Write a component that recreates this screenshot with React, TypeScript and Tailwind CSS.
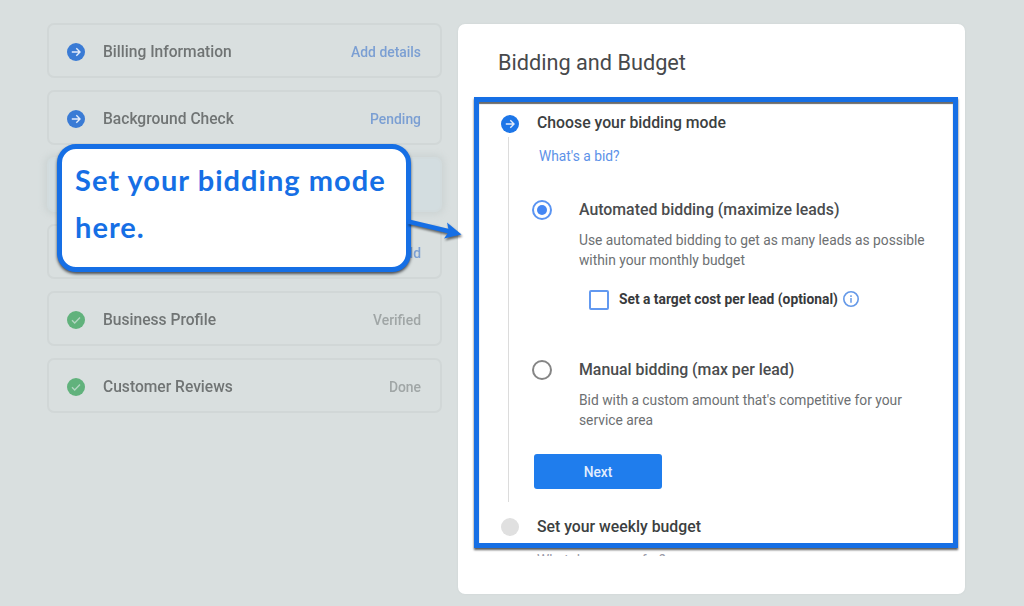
import React from 'react';
import clsx from 'clsx';

interface Step {
  title: string;
  status: string;
  kind: 'todo' | 'active' | 'done';
}

const steps: Step[] = [
  { title: 'Billing Information', status: 'Add details', kind: 'todo' },
  { title: 'Background Check', status: 'Pending', kind: 'todo' },
  { title: '', status: '', kind: 'active' },
  { title: '', status: 'Add', kind: 'todo' },
  { title: 'Business Profile', status: 'Verified', kind: 'done' },
  { title: 'Customer Reviews', status: 'Done', kind: 'done' },
];

const ArrowBadge: React.FC<{ className?: string }> = ({ className }) => (
  <svg viewBox="0 0 18 18" className={clsx('h-[18px] w-[18px] shrink-0', className)}>
    <circle cx="9" cy="9" r="9" fill="currentColor" />
    <path d="M4.8 9h8M9.3 5.3 13 9l-3.7 3.7" fill="none" stroke="#e3ecfb" strokeWidth="1.4" />
  </svg>
);

const CheckBadge: React.FC = () => (
  <svg viewBox="0 0 18 18" className="h-[18px] w-[18px] shrink-0">
    <circle cx="9" cy="9" r="9" fill="#61b27c" />
    <path d="m5 9.2 2.7 2.7L13 6.6" fill="none" stroke="#b3d6c2" strokeWidth="1.4" />
  </svg>
);

const StepRow: React.FC<{ step: Step }> = ({ step }) => (
  <div
    className={clsx(
      'flex h-[55px] items-center rounded-[7px] border-2 pl-[18px] pr-[19px] pt-[2px]',
      step.kind === 'active'
        ? 'border-[#d2dbdd] bg-[#d3dde0] shadow-[0_0_6px_3px_#cdd4d4]'
        : 'border-[#d1d7d7]'
    )}
  >
    {step.title && (
      <>
        {step.kind === 'done' ? <CheckBadge /> : <ArrowBadge className="text-[#3a7bd5]" />}
        <span className="ml-[18px] pt-[2px] text-[15.6px] font-medium text-[#707474]">{step.title}</span>
      </>
    )}
    <span
      className={clsx(
        'ml-auto pt-[2px] text-[13.9px] font-medium',
        step.kind === 'done' ? 'text-[#a0a6a6]' : 'text-[#7b9fd3]'
      )}
    >
      {step.status}
    </span>
  </div>
);

const Callout: React.FC = () => (
  <div className="absolute left-[57px] top-[144px] h-[128px] w-[354px] rounded-[19px] border-[5px] border-[#166fe5] bg-white pl-[13px] pt-[7px] font-['Lato',sans-serif] text-[29px] font-bold leading-[47px] tracking-[1.03px] text-[#166fe5] shadow-[0_2px_3px_#4b4f55]">
    Set your bidding mode
    <br />
    here.
  </div>
);

const CalloutArrow: React.FC = () => (
  <svg
    viewBox="0 0 60 36"
    className="absolute left-[407px] top-[212px] h-[36px] w-[60px] drop-shadow-[1px_2px_1px_rgba(0,0,0,0.55)]"
  >
    <path d="M1 9.500 43 19.500" stroke="#166fe5" strokeWidth="4.5" />
    <path d="M40 10.500 54.500 22.500 37 26.500 42 19.500z" fill="#166fe5" />
  </svg>
);

const App: React.FC = () => {
  return (
    <div className="relative flex h-[606px] w-[1024px] items-start overflow-hidden bg-[#d9dfdf] pl-[47px] pt-6 font-['Roboto',sans-serif]">
      {/* Setup checklist */}
      <div className="-mt-px flex w-[395px] flex-col gap-3 blur-[0.7px]">
        {steps.map((step, index) => (
          <StepRow key={index} step={step} />
        ))}
      </div>

      {/* Bidding panel */}
      <div className="ml-4 flex h-[570px] w-[507px] flex-col rounded-[7px] bg-white pl-4 shadow-[0_0_2px_#cbd2d2]">
        <h1 className="flex h-[73px] items-center pl-6 pt-[6px] text-[21.7px] text-[#47494b]">
          Bidding and Budget
        </h1>

        <div className="flex h-[451px] w-[484px] shrink-0 flex-col border-[5px] border-[#166fe5] pl-[22px] shadow-[0_2px_2px_#5b5b5b,inset_0_2px_1px_#6b6b6b]">
          <div className="flex flex-1">
            <div className="flex w-[18px] shrink-0 flex-col items-center pt-[13px]">
              <ArrowBadge className="text-[#1d76e8]" />
              <div className="mb-[7px] mr-[3px] mt-1 w-px flex-1 bg-[#dcdcdc]" />
            </div>

            <div className="flex flex-col pl-[18px]">
              <h2 className="mt-[9px] text-[15.8px] font-medium leading-6 text-[#3c3f41]">
                Choose your bidding mode
              </h2>
              <a className="ml-[2px] mt-[11px] text-[13.8px] leading-5 text-[#5d92e8]">What's a bid?</a>

              <div className="mt-8 flex">
                <div className="-ml-[5px] mt-[2px] flex h-5 w-5 items-center justify-center rounded-full border-2 border-[#5a94f2]">
                  <div className="h-[10px] w-[10px] rounded-full bg-[#4587f4]" />
                </div>
                <div className="ml-[27px]">
                  <h3 className="text-[15.85px] font-medium leading-6 text-[#4a4c4e]">
                    Automated bidding (maximize leads)
                  </h3>
                  <p className="mt-2 whitespace-pre text-[13.8px] leading-5 text-[#6d7072]">
                    {'Use automated bidding to get as many leads as possible\nwithin your monthly budget'}
                  </p>
                  <div className="ml-[10px] mt-5 flex h-5 items-center">
                    <div className="h-5 w-5 rounded-[2px] border-2 border-[#6299f0]" />
                    <span className="-mt-px ml-[10px] text-[13.8px] font-bold text-[#383a3c]">
                      Set a target cost per lead (optional)
                    </span>
                    <svg viewBox="0 0 16 16" className="-mt-[2px] ml-[5px] h-4 w-4">
                      <circle cx="8" cy="8" r="7.200" fill="none" stroke="#6599e8" strokeWidth="1.6" />
                      <path d="M8 7v4.700M8 4.200v1.700" stroke="#6599e8" strokeWidth="1.500" />
                    </svg>
                  </div>
                </div>
              </div>

              <div className="mt-12 flex">
                <div className="-ml-[5px] mt-[2px] h-5 w-5 rounded-full border-2 border-[#858585]" />
                <div className="ml-[27px]">
                  <h3 className="text-[15.85px] font-medium leading-6 text-[#4a4c4e]">
                    Manual bidding (max per lead)
                  </h3>
                  <p className="mt-2 whitespace-pre text-[13.8px] leading-5 text-[#6d7072]">
                    {"Bid with a custom amount that's competitive for your\nservice area"}
                  </p>
                </div>
              </div>

              <button className="-ml-[3px] mt-6 h-[35px] w-[128px] rounded-[3px] bg-[#1f7ded] pt-px text-[13.8px] font-medium text-[#e2edfd]">
                Next
              </button>
            </div>
          </div>

          <div className="flex h-[34px] items-center">
            <div className="mt-px h-[18px] w-[18px] rounded-full bg-[#e0e0e0]" />
            <h2 className="ml-[18px] pt-px text-[15.8px] font-medium text-[#3c3f41]">Set your weekly budget</h2>
          </div>
        </div>

        {/* Next section, cut off by the panel edge */}
        <div className="mt-1 h-[4px] overflow-hidden pl-[63px] text-[13.8px] leading-4 text-[#9a9aa8]">
          What do you pay for?
        </div>
      </div>

      <Callout />
      <CalloutArrow />
    </div>
  );
};

export default App;
